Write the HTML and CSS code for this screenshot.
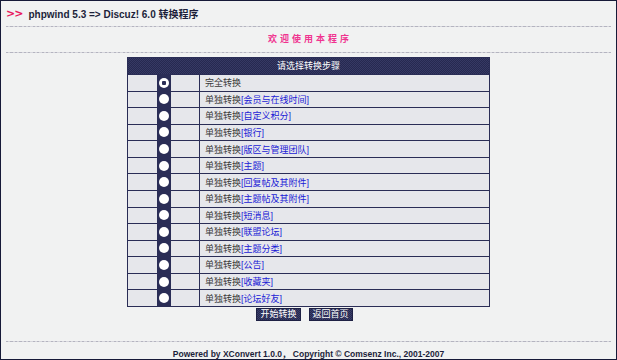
FILE: index.html
```html
<!DOCTYPE html>
<html lang="zh-CN">
<head>
  <meta charset="UTF-8" />
  <title>phpwind 5.3 => Discuz! 6.0 转换程序</title>
  <link rel="stylesheet" href="styles.css">
</head>
<body>
<div class="page">
  <header class="top">
    <span class="arrows">&gt;&gt;</span>
    <h1 class="title">phpwind 5.3 =&gt; Discuz! 6.0 转换程序</h1>
  </header>
  <div class="dots"></div>
  <div class="welcome">欢迎使用本程序</div>
  <div class="dots"></div>

  <form class="steps">
    <div class="steps-head">请选择转换步骤</div>
    <label class="step"><span class="pick"><i class="radio on"></i></span><span class="name">完全转换</span></label>
    <label class="step"><span class="pick"><i class="radio"></i></span><span class="name">单独转换<a>[会员与在线时间]</a></span></label>
    <label class="step"><span class="pick"><i class="radio"></i></span><span class="name">单独转换<a>[自定义积分]</a></span></label>
    <label class="step"><span class="pick"><i class="radio"></i></span><span class="name">单独转换<a>[银行]</a></span></label>
    <label class="step"><span class="pick"><i class="radio"></i></span><span class="name">单独转换<a>[版区与管理团队]</a></span></label>
    <label class="step"><span class="pick"><i class="radio"></i></span><span class="name">单独转换<a>[主题]</a></span></label>
    <label class="step"><span class="pick"><i class="radio"></i></span><span class="name">单独转换<a>[回复帖及其附件]</a></span></label>
    <label class="step"><span class="pick"><i class="radio"></i></span><span class="name">单独转换<a>[主题帖及其附件]</a></span></label>
    <label class="step"><span class="pick"><i class="radio"></i></span><span class="name">单独转换<a>[短消息]</a></span></label>
    <label class="step"><span class="pick"><i class="radio"></i></span><span class="name">单独转换<a>[联盟论坛]</a></span></label>
    <label class="step"><span class="pick"><i class="radio"></i></span><span class="name">单独转换<a>[主题分类]</a></span></label>
    <label class="step"><span class="pick"><i class="radio"></i></span><span class="name">单独转换<a>[公告]</a></span></label>
    <label class="step"><span class="pick"><i class="radio"></i></span><span class="name">单独转换<a>[收藏夹]</a></span></label>
    <label class="step"><span class="pick"><i class="radio"></i></span><span class="name">单独转换<a>[论坛好友]</a></span></label>
  </form>

  <div class="actions">
    <button class="btn" type="button">开始转换</button>
    <button class="btn" type="button">返回首页</button>
  </div>

  <div class="dots foot-line"></div>
  <footer class="foot">Powered by XConvert 1.0.0， Copyright © Comsenz Inc., 2001-2007</footer>
</div>
</body>
</html>
```

FILE: styles.css
```css
html, body {
  margin: 0;
  padding: 0;
  background: #f1f2f2;
}
.page {
  box-sizing: border-box;
  width: 617px;
  height: 360px;
  border: 1px solid #161a38;
  padding: 0 5px;
  background: #f1f2f2;
  font-family: "Liberation Sans", "Noto Sans CJK SC", sans-serif;
  color: #333;
}
.top {
  display: flex;
  align-items: center;
  height: 25px;
}
.arrows {
  color: #e8175d;
  font-family: "DejaVu Sans", sans-serif;
  font-weight: bold;
  font-size: 11px;
  letter-spacing: -1px;
  margin-right: 6px;
  margin-top: -1px;
}
.title {
  margin: 0;
  font-size: 10px;
  font-weight: bold;
  color: #1c1f3a;
}
.dots {
  height: 1px;
  background: repeating-linear-gradient(to right, #b4b4c0 0 2px, #d6d6dc 2px 4.5px);
}
.welcome {
  height: 25px;
  line-height: 25px;
  text-align: center;
  font-size: 9px;
  letter-spacing: 3px;
  color: #f0338f;
  font-weight: bold;
  padding-left: 3px;
}
.steps {
  width: 363px;
  margin: 4px auto 0;
  box-sizing: border-box;
  border: 1px solid #2a2d56;
  font-size: 9px;
}
.steps-head {
  height: 16px;
  line-height: 16px;
  text-align: center;
  color: #fff;
  background: repeating-conic-gradient(#262950 0 25%, #363964 0 50%) 0 0 / 2px 2px;
}
.step {
  display: grid;
  grid-template-columns: 72px 1fr;
  height: 15.57px;
  border-top: 1px solid #2a2d56;
  background: #e6e7eb;
}
.pick {
  display: flex;
  justify-content: center;
  border-right: 1px solid #2a2d56;
}
.radio {
  width: 14px;
  display: flex;
  align-items: center;
  justify-content: center;
  background: #2a2d56;
}
.radio::before {
  content: "";
  width: 10px;
  height: 10px;
  border-radius: 50%;
  background: #fff;
}
.radio.on::before {
  background: radial-gradient(circle, #2a2d56 0 2px, #fff 2.5px);
}
.name {
  display: flex;
  align-items: center;
  padding-left: 5px;
  color: #3a3a3a;
}
.name a {
  color: #1a1ad6;
}
.actions {
  display: flex;
  justify-content: center;
  gap: 8px;
  margin-top: 1px;
  padding-right: 8px;
}
.btn {
  height: 13px;
  padding: 0 3px;
  border: 1px solid #1e2144;
  background: repeating-conic-gradient(#262950 0 25%, #3a3d68 0 50%) 0 0 / 2px 2px;
  color: #fff;
  font-family: "Liberation Sans", "Noto Sans CJK SC", sans-serif;
  font-size: 9px;
  line-height: 11px;
}
.foot-line {
  margin-top: 20px;
}
.foot {
  text-align: center;
  font-size: 8.5px;
  font-weight: bold;
  color: #1c1f3a;
  line-height: 12px;
  margin-top: 6px;
}
```
